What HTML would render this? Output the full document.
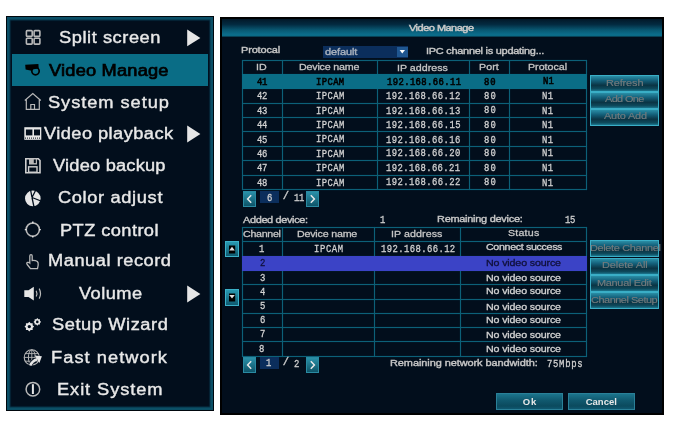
<!DOCTYPE html>
<html><head><meta charset="utf-8"><style>
*{margin:0;padding:0;box-sizing:border-box}
html,body{width:680px;height:438px;background:#fff;overflow:hidden;position:relative;font-family:"Liberation Sans",sans-serif}
.a{position:absolute}
.t{position:absolute;white-space:nowrap;line-height:1}
.mi{font-size:16px;-webkit-text-stroke:0.38px currentColor;transform:scaleX(1.14);transform-origin:0 0}
.s10{font-size:9.5px;-webkit-text-stroke:0.3px currentColor;transform:scaleX(1.12);transform-origin:0 0}
.sb{font-size:9.5px;-webkit-text-stroke:0.4px currentColor;transform:scaleX(1.15);transform-origin:0 0}
.s9b{font-size:9.5px;font-weight:bold}
.mono{font-family:"Liberation Mono",monospace;font-size:10.6px;-webkit-text-stroke:0.3px currentColor;transform:scaleX(0.84);transform-origin:0 0}
.btn{position:absolute;left:590px;width:69px;height:17px;border:1px solid #3aaec6;background:linear-gradient(#2a8ea6 0%,#14607a 30%,#0a3444 62%,#0e4a5c 85%,#1c7890 100%)}
.pbtn{position:absolute;width:13px;height:16px;background:linear-gradient(#2a90a8,#0e5468);border:1px solid #2a8aa2}
.okb{position:absolute;top:393px;height:17px;width:67px;border:1px solid #2a8098;background:linear-gradient(#1b748c 0%,#115a70 40%,#0b4a5e 80%,#0f5870 100%)}
</style></head>
<body><div id="wrap" style="position:absolute;left:0;top:0;width:680px;height:438px;filter:blur(0.35px)">
<div class="a" style="left:6px;top:16px;width:208px;height:395px;background:#020e1c;border:1px solid #00070d;box-shadow:inset 0 0 0 2.5px #0b4f66,inset 0 0 1px 3.5px #07354a"></div>
<div class="a" style="left:12px;top:54px;width:196px;height:31.6px;background:#0a6d86"></div>
<div class="t mi" id="m0" style="left:59.27px;top:29.85px;letter-spacing:0.490px;color:#e8e8e8;">Split screen</div>
<div class="t mi" id="m1" style="left:49.30px;top:63.25px;letter-spacing:0.176px;color:#000;-webkit-text-stroke:0.7px currentColor">Video Manage</div>
<div class="t mi" id="m2" style="left:48.27px;top:95.30px;letter-spacing:0.834px;color:#e8e8e8;">System setup</div>
<div class="t mi" id="m3" style="left:43.52px;top:126.35px;letter-spacing:0.385px;color:#e8e8e8;">Video playback</div>
<div class="t mi" id="m4" style="left:52.96px;top:157.93px;letter-spacing:0.183px;color:#e8e8e8;">Video backup</div>
<div class="t mi" id="m5" style="left:57.77px;top:189.80px;letter-spacing:0.568px;color:#e8e8e8;">Color adjust</div>
<div class="t mi" id="m6" style="left:59.75px;top:222.96px;letter-spacing:0.371px;color:#e8e8e8;">PTZ control</div>
<div class="t mi" id="m7" style="left:47.67px;top:253.26px;letter-spacing:0.468px;color:#e8e8e8;">Manual record</div>
<div class="t mi" id="m8" style="left:78.78px;top:286.14px;letter-spacing:0.407px;color:#e8e8e8;">Volume</div>
<div class="t mi" id="m9" style="left:51.55px;top:317.23px;letter-spacing:0.508px;color:#e8e8e8;">Setup Wizard</div>
<div class="t mi" id="m10" style="left:50.67px;top:349.96px;letter-spacing:0.920px;color:#e8e8e8;">Fast network</div>
<div class="t mi" id="m11" style="left:56.67px;top:381.86px;letter-spacing:0.811px;color:#e8e8e8;">Exit System</div>
<svg class="a" id="icons" style="left:0;top:0" width="680" height="438" viewBox="0 0 680 438"><path d="M187.2 29.5 L200.4 37.9 L187.2 46.3 Z" fill="#e6e6e6"/><path d="M187.2 125.6 L200.4 134.0 L187.2 142.4 Z" fill="#e6e6e6"/><path d="M187.2 285.6 L200.4 294.0 L187.2 302.4 Z" fill="#e6e6e6"/><rect x="26.400000000000002" y="30.6" width="5.8" height="5.8" rx="0.8" fill="none" stroke="#b8b8b8" stroke-width="1.6"/><rect x="26.400000000000002" y="38.3" width="5.8" height="5.8" rx="0.8" fill="none" stroke="#b8b8b8" stroke-width="1.6"/><rect x="34.099999999999994" y="30.6" width="5.8" height="5.8" rx="0.8" fill="none" stroke="#b8b8b8" stroke-width="1.6"/><rect x="34.099999999999994" y="38.3" width="5.8" height="5.8" rx="0.8" fill="none" stroke="#b8b8b8" stroke-width="1.6"/><path d="M25.2 64.8 L38.4 64.1 L38.7 68.6 L33.5 69.2 L31.5 70.8 L25.6 69.6 Z" fill="#000"/><circle cx="35.5" cy="71.1" r="3.7" fill="none" stroke="#000" stroke-width="1.7"/><path d="M24.8 100.5 L32.8 93.6 L40.8 100.5 M26.3 99.4 L26.3 109.3 L39.3 109.3 L39.3 99.4 M30.8 109.3 L30.8 104.5 L34.5 104.5 L34.5 109.3" fill="none" stroke="#b8b8b8" stroke-width="1.2"/><rect x="24.3" y="127.2" width="17" height="12.6" fill="#e6e6e6"/><rect x="25.9" y="129.5" width="6.5" height="5.9" fill="#020e1c"/><rect x="34" y="129.5" width="6" height="5.9" fill="#020e1c"/><rect x="25" y="137.6" width="1" height="1" fill="#020e1c"/><rect x="27" y="137.6" width="1" height="1" fill="#020e1c"/><rect x="29" y="137.6" width="1" height="1" fill="#020e1c"/><rect x="31" y="137.6" width="1" height="1" fill="#020e1c"/><rect x="33" y="137.6" width="1" height="1" fill="#020e1c"/><rect x="35" y="137.6" width="1" height="1" fill="#020e1c"/><rect x="37" y="137.6" width="1" height="1" fill="#020e1c"/><rect x="39" y="137.6" width="1" height="1" fill="#020e1c"/><path d="M25.8 158.8 L38.3 158.8 L40 160.5 L40 172.7 L25.8 172.7 Z" fill="none" stroke="#cfcfcf" stroke-width="1.6"/><rect x="29" y="158.5" width="8" height="6" fill="#b8b8b8"/><rect x="33.8" y="159.5" width="2" height="3.6" fill="#020e1c"/><rect x="28.6" y="166.8" width="8.4" height="5.4" fill="none" stroke="#cfcfcf" stroke-width="1.4"/><circle cx="32.8" cy="198.4" r="7.8" fill="#e6e6e6"/><path d="M32 197.5 L30.5 189.5 M32 197.5 L35.8 190 M32 197.5 L41 201 M32 197.5 L34 207" stroke="#020e1c" stroke-width="1.3" fill="none"/><circle cx="32.8" cy="229.6" r="6.6" fill="none" stroke="#b8b8b8" stroke-width="1.6"/><path d="M32.8 221.6 V223.4 M32.8 235.8 V237.6 M24.8 229.6 H26.6 M39 229.6 H40.8" stroke="#e6e6e6" stroke-width="1.4"/><path d="M29.8 263 L29.8 256 Q29.8 254.6 31 254.6 Q32.2 254.6 32.2 256 L32.2 260.5 Q35.5 260.3 37.4 261.5 Q38.4 262.5 38.2 265 L37.5 268.6 L30.5 268.6 L27.2 264.5 Q26.2 263 27.5 262.4 Q28.6 262 29.8 263 Z" fill="none" stroke="#b8b8b8" stroke-width="1.3"/><path d="M24.3 290.2 H28.5 L33.8 286.8 V300.4 L28.5 297 H24.3 Z" fill="#e6e6e6"/><path d="M36.2 290.8 Q37.6 293.6 36.2 296.4 M39.2 288.6 Q41.8 293.6 39.2 298.6" stroke="#b8b8b8" stroke-width="1.2" fill="none"/><path d="M34.10,326.60 L32.63,327.98 L32.69,329.99 L30.68,329.93 L29.30,331.40 L27.92,329.93 L25.91,329.99 L25.97,327.98 L24.50,326.60 L25.97,325.22 L25.91,323.21 L27.92,323.27 L29.30,321.80 L30.68,323.27 L32.69,323.21 L32.63,325.22 Z M31.00,326.60 A1.7,1.7 0 1 0 27.60,326.60 A1.7,1.7 0 1 0 31.00,326.60 Z" fill="#e6e6e6" fill-rule="evenodd"/><path d="M41.10,321.90 L39.93,322.99 L39.99,324.59 L38.39,324.53 L37.30,325.70 L36.21,324.53 L34.61,324.59 L34.67,322.99 L33.50,321.90 L34.67,320.81 L34.61,319.21 L36.21,319.27 L37.30,318.10 L38.39,319.27 L39.99,319.21 L39.93,320.81 Z M38.60,321.90 A1.3,1.3 0 1 0 36.00,321.90 A1.3,1.3 0 1 0 38.60,321.90 Z" fill="#e6e6e6" fill-rule="evenodd"/><circle cx="31.8" cy="357.4" r="7.6" fill="none" stroke="#b8b8b8" stroke-width="1.1"/><ellipse cx="31.8" cy="357.4" rx="3.4" ry="7.6" fill="none" stroke="#b8b8b8" stroke-width="1"/><path d="M24.2 357.4 H39.4 M25.2 353.6 H38.4 M25.2 361.2 H38.4 M31.8 349.8 V365" stroke="#b8b8b8" stroke-width="0.9" fill="none"/><path d="M30.2 365.6 Q32.2 360.8 37.2 359.2" stroke="#020e1c" stroke-width="4" fill="none"/><path d="M30.2 365.6 Q32.2 360.8 37.2 359.2" stroke="#e6e6e6" stroke-width="2.6" fill="none"/><path d="M34.8 355.4 L41.9 356.2 L39.4 363 Z" fill="#e6e6e6"/><circle cx="32.9" cy="389.2" r="6.8" fill="none" stroke="#b8b8b8" stroke-width="1.5"/><path d="M32.9 384.2 V394" stroke="#e6e6e6" stroke-width="2"/></svg>
<div class="a" style="left:220px;top:17px;width:444px;height:398px;background:#020e1c;border:2px solid #000"></div>
<div class="a" style="left:222px;top:18.6px;width:440px;height:18.4px;background:linear-gradient(#021828 0%,#032a40 30%,#085670 60%,#0b6c8a 85%,#0b6a86 94%,#03202e 100%)"></div>
<div class="t sb" id="title" style="left:409.36px;top:22.72px;letter-spacing:-0.418px;color:#c8c8c8;-webkit-text-stroke:0.5px currentColor">Video Manage</div>
<div class="t sb" id="protocal" style="left:241.12px;top:45.14px;letter-spacing:-0.113px;color:#c6c6c6;">Protocal</div>
<div class="a" style="left:323px;top:46px;width:85px;height:11.6px;background:#0b2e5c"></div>
<div class="t sb" id="default" style="left:325.28px;top:46.54px;letter-spacing:-0.060px;color:#a8b0bc;">default</div>
<div class="a" style="left:397px;top:47px;width:10.6px;height:9.5px;background:#1f5690"></div>
<svg class="a" style="left:397px;top:47px" width="11" height="10"><path d="M2.6 3 L8 3 L5.3 6.6 Z" fill="#fff"/></svg>
<div class="t sb" id="ipcupd" style="left:426.03px;top:45.98px;letter-spacing:-0.216px;color:#c6c6c6;">IPC channel is updating...</div>
<div class="a" style="left:242px;top:60px;width:345px;height:1px;background:#0c6078;box-shadow:0 0 1px #0a5068"></div>
<div class="a" style="left:242px;top:74px;width:345px;height:1px;background:#0c6078;box-shadow:0 0 1px #0a5068"></div>
<div class="a" style="left:242px;top:88px;width:345px;height:1px;background:#0c6078;box-shadow:0 0 1px #0a5068"></div>
<div class="a" style="left:242px;top:103px;width:345px;height:1px;background:#0c6078;box-shadow:0 0 1px #0a5068"></div>
<div class="a" style="left:242px;top:117px;width:345px;height:1px;background:#0c6078;box-shadow:0 0 1px #0a5068"></div>
<div class="a" style="left:242px;top:131px;width:345px;height:1px;background:#0c6078;box-shadow:0 0 1px #0a5068"></div>
<div class="a" style="left:242px;top:146px;width:345px;height:1px;background:#0c6078;box-shadow:0 0 1px #0a5068"></div>
<div class="a" style="left:242px;top:160px;width:345px;height:1px;background:#0c6078;box-shadow:0 0 1px #0a5068"></div>
<div class="a" style="left:242px;top:175px;width:345px;height:1px;background:#0c6078;box-shadow:0 0 1px #0a5068"></div>
<div class="a" style="left:242px;top:189px;width:345px;height:1px;background:#0c6078;box-shadow:0 0 1px #0a5068"></div>
<div class="a" style="left:242px;top:60px;width:1px;height:130px;background:#0c6078;box-shadow:0 0 1px #0a5068"></div>
<div class="a" style="left:282px;top:60px;width:1px;height:130px;background:#0c6078;box-shadow:0 0 1px #0a5068"></div>
<div class="a" style="left:377px;top:60px;width:1px;height:130px;background:#0c6078;box-shadow:0 0 1px #0a5068"></div>
<div class="a" style="left:469px;top:60px;width:1px;height:130px;background:#0c6078;box-shadow:0 0 1px #0a5068"></div>
<div class="a" style="left:509px;top:60px;width:1px;height:130px;background:#0c6078;box-shadow:0 0 1px #0a5068"></div>
<div class="a" style="left:586px;top:60px;width:1px;height:130px;background:#0c6078;box-shadow:0 0 1px #0a5068"></div>
<div class="a" style="left:242px;top:74px;width:345px;height:15px;background:#0a6d86"></div>
<div class="t s10" id="h1_0" style="left:256.49px;top:62.37px;letter-spacing:0.130px;color:#c6c6c6;">ID</div>
<div class="t s10" id="h1_1" style="left:299.49px;top:62.46px;letter-spacing:-0.153px;color:#c6c6c6;">Device name</div>
<div class="t s10" id="h1_2" style="left:396.80px;top:62.65px;letter-spacing:0.012px;color:#c6c6c6;">IP address</div>
<div class="t s10" id="h1_3" style="left:478.81px;top:61.81px;letter-spacing:0.086px;color:#c6c6c6;">Port</div>
<div class="t s10" id="h1_4" style="left:528.36px;top:62.39px;letter-spacing:-0.003px;color:#c6c6c6;">Protocal</div>
<div class="t mono" id="r0_0" style="left:256.78px;top:76.69px;letter-spacing:-0.400px;color:#000;-webkit-text-stroke:0.6px currentColor">41</div>
<div class="t mono" id="r0_1" style="left:316.07px;top:76.71px;letter-spacing:0.442px;color:#000;-webkit-text-stroke:0.6px currentColor">IPCAM</div>
<div class="t mono" id="r0_2" style="left:386.60px;top:76.58px;letter-spacing:0.451px;color:#000;-webkit-text-stroke:0.6px currentColor">192.168.66.11</div>
<div class="t mono" id="r0_3" style="left:483.83px;top:77.13px;letter-spacing:1.046px;color:#000;-webkit-text-stroke:0.6px currentColor">80</div>
<div class="t mono" id="r0_4" style="left:542.69px;top:76.49px;letter-spacing:0.325px;color:#000;-webkit-text-stroke:0.6px currentColor">N1</div>
<div class="t mono" id="r1_0" style="left:256.76px;top:91.10px;letter-spacing:-0.400px;color:#d2d2d2;">42</div>
<div class="t mono" id="r1_1" style="left:315.67px;top:91.27px;letter-spacing:0.507px;color:#d2d2d2;">IPCAM</div>
<div class="t mono" id="r1_2" style="left:386.22px;top:90.97px;letter-spacing:0.483px;color:#d2d2d2;">192.168.66.12</div>
<div class="t mono" id="r1_3" style="left:483.99px;top:90.89px;letter-spacing:1.379px;color:#d2d2d2;">80</div>
<div class="t mono" id="r1_4" style="left:542.17px;top:91.00px;letter-spacing:0.450px;color:#d2d2d2;">N1</div>
<div class="t mono" id="r2_0" style="left:256.80px;top:105.65px;letter-spacing:-0.400px;color:#d2d2d2;">43</div>
<div class="t mono" id="r2_1" style="left:315.67px;top:105.82px;letter-spacing:0.507px;color:#d2d2d2;">IPCAM</div>
<div class="t mono" id="r2_2" style="left:386.22px;top:105.53px;letter-spacing:0.492px;color:#d2d2d2;">192.168.66.13</div>
<div class="t mono" id="r2_3" style="left:483.99px;top:105.44px;letter-spacing:1.379px;color:#d2d2d2;">80</div>
<div class="t mono" id="r2_4" style="left:542.17px;top:105.55px;letter-spacing:0.450px;color:#d2d2d2;">N1</div>
<div class="t mono" id="r3_0" style="left:256.51px;top:120.21px;letter-spacing:-0.400px;color:#d2d2d2;">44</div>
<div class="t mono" id="r3_1" style="left:315.67px;top:120.38px;letter-spacing:0.507px;color:#d2d2d2;">IPCAM</div>
<div class="t mono" id="r3_2" style="left:386.22px;top:120.17px;letter-spacing:0.503px;color:#d2d2d2;">192.168.66.15</div>
<div class="t mono" id="r3_3" style="left:483.99px;top:120.00px;letter-spacing:1.379px;color:#d2d2d2;">80</div>
<div class="t mono" id="r3_4" style="left:542.17px;top:120.11px;letter-spacing:0.450px;color:#d2d2d2;">N1</div>
<div class="t mono" id="r4_0" style="left:256.72px;top:134.77px;letter-spacing:-0.400px;color:#d2d2d2;">45</div>
<div class="t mono" id="r4_1" style="left:315.67px;top:134.14px;letter-spacing:0.507px;color:#d2d2d2;">IPCAM</div>
<div class="t mono" id="r4_2" style="left:386.22px;top:134.64px;letter-spacing:0.484px;color:#d2d2d2;">192.168.66.16</div>
<div class="t mono" id="r4_3" style="left:483.99px;top:134.56px;letter-spacing:1.379px;color:#d2d2d2;">80</div>
<div class="t mono" id="r4_4" style="left:542.17px;top:134.67px;letter-spacing:0.450px;color:#d2d2d2;">N1</div>
<div class="t mono" id="r5_0" style="left:256.78px;top:148.55px;letter-spacing:-0.400px;color:#d2d2d2;">46</div>
<div class="t mono" id="r5_1" style="left:315.67px;top:148.69px;letter-spacing:0.507px;color:#d2d2d2;">IPCAM</div>
<div class="t mono" id="r5_2" style="left:386.22px;top:148.32px;letter-spacing:0.487px;color:#d2d2d2;">192.168.66.20</div>
<div class="t mono" id="r5_3" style="left:483.99px;top:148.31px;letter-spacing:1.379px;color:#d2d2d2;">80</div>
<div class="t mono" id="r5_4" style="left:542.17px;top:148.42px;letter-spacing:0.450px;color:#d2d2d2;">N1</div>
<div class="t mono" id="r6_0" style="left:256.85px;top:163.10px;letter-spacing:-0.400px;color:#d2d2d2;">47</div>
<div class="t mono" id="r6_1" style="left:315.67px;top:163.25px;letter-spacing:0.507px;color:#d2d2d2;">IPCAM</div>
<div class="t mono" id="r6_2" style="left:386.22px;top:162.89px;letter-spacing:0.471px;color:#d2d2d2;">192.168.66.21</div>
<div class="t mono" id="r6_3" style="left:483.99px;top:162.87px;letter-spacing:1.379px;color:#d2d2d2;">80</div>
<div class="t mono" id="r6_4" style="left:542.17px;top:162.98px;letter-spacing:0.450px;color:#d2d2d2;">N1</div>
<div class="t mono" id="r7_0" style="left:256.83px;top:177.67px;letter-spacing:-0.400px;color:#d2d2d2;">48</div>
<div class="t mono" id="r7_1" style="left:315.67px;top:177.80px;letter-spacing:0.507px;color:#d2d2d2;">IPCAM</div>
<div class="t mono" id="r7_2" style="left:386.22px;top:177.40px;letter-spacing:0.483px;color:#d2d2d2;">192.168.66.22</div>
<div class="t mono" id="r7_3" style="left:483.99px;top:177.42px;letter-spacing:1.379px;color:#d2d2d2;">80</div>
<div class="t mono" id="r7_4" style="left:542.17px;top:177.53px;letter-spacing:0.450px;color:#d2d2d2;">N1</div>
<div class="btn" style="top:75px"></div>
<div class="t sb" id="b1_0" style="left:605.50px;top:77.73px;letter-spacing:-0.115px;color:#747c7e;-webkit-text-stroke:0.15px currentColor">Refresh</div>
<div class="btn" style="top:92px"></div>
<div class="t sb" id="b1_1" style="left:604.95px;top:94.22px;letter-spacing:-0.565px;color:#747c7e;-webkit-text-stroke:0.15px currentColor">Add One</div>
<div class="btn" style="top:109px"></div>
<div class="t sb" id="b1_2" style="left:603.78px;top:111.19px;letter-spacing:-0.159px;color:#747c7e;-webkit-text-stroke:0.15px currentColor">Auto Add</div>
<div class="pbtn" style="left:243px;top:191px"></div>
<svg class="a" style="left:243px;top:191px" width="13" height="16"><path d="M8.2 4.2 L4.6 8 L8.2 11.8" stroke="#e8e8e8" stroke-width="1.5" fill="none"/></svg>
<div class="a" style="left:260px;top:191px;width:19px;height:11.6px;background:#0b2e5c"></div>
<div class="t mono" id="pg1c" style="left:266.56px;top:192.66px;letter-spacing:0.000px;color:#d0d0d0;">6</div>
<div class="t s10" style="left:284px;top:190px;font-style:italic;font-size:11px;color:#d0d0d0">/</div>
<div class="t mono" id="pg1t" style="left:294.14px;top:192.61px;letter-spacing:-0.400px;color:#d0d0d0;">11</div>
<div class="pbtn" style="left:306px;top:191px"></div>
<svg class="a" style="left:306px;top:191px" width="13" height="16"><path d="M4.8 4.2 L8.4 8 L4.8 11.8" stroke="#e8e8e8" stroke-width="1.5" fill="none"/></svg>
<div class="t sb" id="added" style="left:242.68px;top:214.50px;letter-spacing:-0.305px;color:#c6c6c6;">Added device:</div>
<div class="t mono" id="added_n" style="left:380.12px;top:215.12px;letter-spacing:0.000px;color:#d0d0d0;">1</div>
<div class="t sb" id="remdev" style="left:437.38px;top:214.40px;letter-spacing:-0.225px;color:#c6c6c6;">Remaining device:</div>
<div class="t mono" id="remdev_n" style="left:565.22px;top:215.47px;letter-spacing:-0.400px;color:#d0d0d0;">15</div>
<div class="a" style="left:242px;top:227px;width:345px;height:1px;background:#0c6078;box-shadow:0 0 1px #0a5068"></div>
<div class="a" style="left:242px;top:241px;width:345px;height:1px;background:#0c6078;box-shadow:0 0 1px #0a5068"></div>
<div class="a" style="left:242px;top:256px;width:345px;height:1px;background:#0c6078;box-shadow:0 0 1px #0a5068"></div>
<div class="a" style="left:242px;top:270px;width:345px;height:1px;background:#0c6078;box-shadow:0 0 1px #0a5068"></div>
<div class="a" style="left:242px;top:284px;width:345px;height:1px;background:#0c6078;box-shadow:0 0 1px #0a5068"></div>
<div class="a" style="left:242px;top:299px;width:345px;height:1px;background:#0c6078;box-shadow:0 0 1px #0a5068"></div>
<div class="a" style="left:242px;top:313px;width:345px;height:1px;background:#0c6078;box-shadow:0 0 1px #0a5068"></div>
<div class="a" style="left:242px;top:327px;width:345px;height:1px;background:#0c6078;box-shadow:0 0 1px #0a5068"></div>
<div class="a" style="left:242px;top:341px;width:345px;height:1px;background:#0c6078;box-shadow:0 0 1px #0a5068"></div>
<div class="a" style="left:242px;top:356px;width:345px;height:1px;background:#0c6078;box-shadow:0 0 1px #0a5068"></div>
<div class="a" style="left:242px;top:227px;width:1px;height:130px;background:#0c6078;box-shadow:0 0 1px #0a5068"></div>
<div class="a" style="left:282px;top:227px;width:1px;height:130px;background:#0c6078;box-shadow:0 0 1px #0a5068"></div>
<div class="a" style="left:374px;top:227px;width:1px;height:130px;background:#0c6078;box-shadow:0 0 1px #0a5068"></div>
<div class="a" style="left:460px;top:227px;width:1px;height:130px;background:#0c6078;box-shadow:0 0 1px #0a5068"></div>
<div class="a" style="left:586px;top:227px;width:1px;height:130px;background:#0c6078;box-shadow:0 0 1px #0a5068"></div>
<div class="a" style="left:242px;top:256px;width:345px;height:15px;background:#3b43c6"></div>
<div class="t s10" id="h2_0" style="left:242.65px;top:229.46px;letter-spacing:-0.245px;color:#c6c6c6;">Channel</div>
<div class="t s10" id="h2_1" style="left:297.17px;top:229.09px;letter-spacing:-0.163px;color:#c6c6c6;">Device name</div>
<div class="t s10" id="h2_2" style="left:391.29px;top:229.13px;letter-spacing:0.073px;color:#c6c6c6;">IP address</div>
<div class="t s10" id="h2_3" style="left:508.09px;top:228.09px;letter-spacing:0.187px;color:#c6c6c6;">Status</div>
<div class="t mono" id="q0_0" style="left:259.40px;top:243.95px;letter-spacing:0.000px;color:#d2d2d2;">1</div>
<div class="t mono" id="q0_1" style="left:314.06px;top:243.65px;letter-spacing:0.718px;color:#d2d2d2;">IPCAM</div>
<div class="t mono" id="q0_2" style="left:380.58px;top:243.98px;letter-spacing:0.475px;color:#d2d2d2;">192.168.66.12</div>
<div class="t s10" id="q0_3" style="left:485.78px;top:242.42px;letter-spacing:-0.292px;color:#d2d2d2;">Connect success</div>
<div class="t mono" id="q1_0" style="left:259.86px;top:257.83px;letter-spacing:0.000px;color:#10103a;">2</div>
<div class="t s10" id="q1_3" style="left:485.94px;top:258.41px;letter-spacing:-0.121px;color:#10103a;">No video source</div>
<div class="t mono" id="q2_0" style="left:259.60px;top:272.68px;letter-spacing:0.000px;color:#d2d2d2;">3</div>
<div class="t s10" id="q2_3" style="left:485.94px;top:272.79px;letter-spacing:-0.121px;color:#d2d2d2;">No video source</div>
<div class="t mono" id="q3_0" style="left:259.63px;top:287.07px;letter-spacing:0.000px;color:#d2d2d2;">4</div>
<div class="t s10" id="q3_3" style="left:485.94px;top:286.37px;letter-spacing:-0.121px;color:#d2d2d2;">No video source</div>
<div class="t mono" id="q4_0" style="left:259.76px;top:301.42px;letter-spacing:0.000px;color:#d2d2d2;">5</div>
<div class="t s10" id="q4_3" style="left:485.94px;top:301.55px;letter-spacing:-0.121px;color:#d2d2d2;">No video source</div>
<div class="t mono" id="q5_0" style="left:260.05px;top:315.00px;letter-spacing:0.000px;color:#d2d2d2;">6</div>
<div class="t s10" id="q5_3" style="left:485.94px;top:315.13px;letter-spacing:-0.121px;color:#d2d2d2;">No video source</div>
<div class="t mono" id="q6_0" style="left:259.68px;top:329.30px;letter-spacing:0.000px;color:#d2d2d2;">7</div>
<div class="t s10" id="q6_3" style="left:485.94px;top:329.51px;letter-spacing:-0.121px;color:#d2d2d2;">No video source</div>
<div class="t mono" id="q7_0" style="left:259.47px;top:344.06px;letter-spacing:0.000px;color:#d2d2d2;">8</div>
<div class="t s10" id="q7_3" style="left:485.94px;top:343.89px;letter-spacing:-0.121px;color:#d2d2d2;">No video source</div>
<div class="btn" style="top:240px"></div>
<div class="t sb" id="b2_0" style="left:590.19px;top:243.31px;letter-spacing:-0.298px;color:#747c7e;-webkit-text-stroke:0.15px currentColor">Delete Channel</div>
<div class="btn" style="top:257.5px"></div>
<div class="t sb" id="b2_1" style="left:601.94px;top:260.38px;letter-spacing:-0.046px;color:#747c7e;-webkit-text-stroke:0.15px currentColor">Delete All</div>
<div class="btn" style="top:275px"></div>
<div class="t sb" id="b2_2" style="left:596.64px;top:278.35px;letter-spacing:-0.261px;color:#747c7e;-webkit-text-stroke:0.15px currentColor">Manual Edit</div>
<div class="btn" style="top:292px"></div>
<div class="t sb" id="b2_3" style="left:590.65px;top:295.24px;letter-spacing:-0.408px;color:#747c7e;-webkit-text-stroke:0.15px currentColor">Channel Setup</div>
<div class="a" style="left:224.6px;top:240.5px;width:14px;height:16.5px;background:linear-gradient(#2898b0,#0f5a70);border:1px solid #3ab0c8"></div>
<svg class="a" style="left:224.6px;top:240.5px" width="14" height="17"><rect x="4" y="4.5" width="6.2" height="8" fill="#000"/><path d="M4.2 8.6 L7 5 L9.8 8.6 Z" fill="#e0e0e0" transform="translate(0,0.8)"/></svg>
<div class="a" style="left:224.6px;top:289px;width:14px;height:16.5px;background:linear-gradient(#2898b0,#0f5a70);border:1px solid #3ab0c8"></div>
<svg class="a" style="left:224.6px;top:289px" width="14" height="17"><rect x="4" y="4.5" width="6.2" height="8" fill="#000"/><path d="M4.2 5.2 L9.8 5.2 L7 8.8 Z" fill="#e0e0e0" transform="translate(0,0.8)"/></svg>
<div class="pbtn" style="left:243px;top:357px"></div>
<svg class="a" style="left:243px;top:357px" width="13" height="16"><path d="M8.2 4.2 L4.6 8 L8.2 11.8" stroke="#e8e8e8" stroke-width="1.5" fill="none"/></svg>
<div class="a" style="left:260px;top:357px;width:19px;height:11.6px;background:#0b2e5c"></div>
<div class="t mono" id="pg2c" style="left:265.94px;top:358.31px;letter-spacing:0.000px;color:#d0d0d0;">1</div>
<div class="t s10" style="left:284px;top:356px;font-style:italic;font-size:11px;color:#d0d0d0">/</div>
<div class="t mono" id="pg2t" style="left:294.45px;top:358.63px;letter-spacing:-0.400px;color:#d0d0d0;">2</div>
<div class="pbtn" style="left:306px;top:357px"></div>
<svg class="a" style="left:306px;top:357px" width="13" height="16"><path d="M4.8 4.2 L8.4 8 L4.8 11.8" stroke="#e8e8e8" stroke-width="1.5" fill="none"/></svg>
<div class="t sb" id="bandw" style="left:390.41px;top:357.53px;letter-spacing:-0.053px;color:#c6c6c6;">Remaining network bandwidth:</div>
<div class="t mono" id="bandw_n" style="left:547.14px;top:359.26px;letter-spacing:0.845px;color:#d0d0d0;">75Mbps</div>
<div class="okb" style="left:496px"></div>
<div class="okb" style="left:568px"></div>
<div class="t s9b" id="ok" style="left:522.65px;top:396.61px;letter-spacing:0.861px;color:#e8e8e8;">Ok</div>
<div class="t s9b" id="cancel" style="left:585.65px;top:396.63px;letter-spacing:0.040px;color:#e8e8e8;">Cancel</div>
</div></body></html>
